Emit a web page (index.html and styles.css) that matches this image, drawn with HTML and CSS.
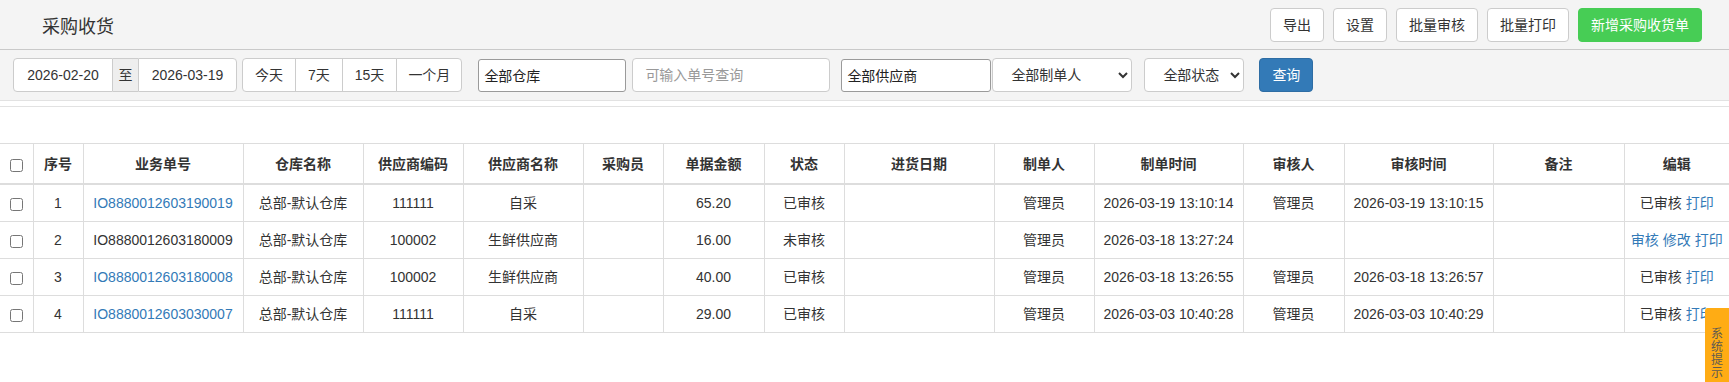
FILE: index.html
```html
<!DOCTYPE html>
<html>
<head>
    <meta charset="utf-8">
    <title>采购收货</title>
    <link rel="stylesheet" href="styles.css">
</head>
<body>
    <div class="page-header">
        <h1 class="page-title">采购收货</h1>
        <div class="header-actions">
            <button class="btn">导出</button>
            <button class="btn">设置</button>
            <button class="btn">批量审核</button>
            <button class="btn">批量打印</button>
            <button class="btn btn-green">新增采购收货单</button>
        </div>
    </div>

    <div class="toolbar">
        <div class="date-range">
            <input type="text" class="date-input" value="2026-02-20" readonly>
            <span class="date-sep">至</span>
            <input type="text" class="date-input" value="2026-03-19" readonly>
        </div>
        <div class="quick-days">
            <button class="btn">今天</button>
            <button class="btn">7天</button>
            <button class="btn">15天</button>
            <button class="btn">一个月</button>
        </div>
        <input type="text" class="pick-input warehouse" value="全部仓库" readonly>
        <input type="text" class="search-input" placeholder="可输入单号查询">
        <input type="text" class="pick-input supplier" value="全部供应商" readonly>
        <select class="filter-select maker"><option>全部制单人</option></select>
        <select class="filter-select status"><option>全部状态</option></select>
        <button class="btn btn-primary">查询</button>
    </div>
    <div class="divider"></div>

    <table class="list-table">
        <colgroup>
            <col style="width:33px"><col style="width:50px"><col style="width:160px"><col style="width:120px">
            <col style="width:100px"><col style="width:120px"><col style="width:80px"><col style="width:101px">
            <col style="width:80px"><col style="width:150px"><col style="width:100px"><col style="width:149px">
            <col style="width:101px"><col style="width:149px"><col style="width:131px"><col>
        </colgroup>
        <thead>
            <tr>
                <th><input type="checkbox"></th>
                <th>序号</th><th>业务单号</th><th>仓库名称</th><th>供应商编码</th><th>供应商名称</th>
                <th>采购员</th><th>单据金额</th><th>状态</th><th>进货日期</th><th>制单人</th>
                <th>制单时间</th><th>审核人</th><th>审核时间</th><th>备注</th><th>编辑</th>
            </tr>
        </thead>
        <tbody>
            <tr>
                <td><input type="checkbox"></td>
                <td>1</td><td><a href="#">IO8880012603190019</a></td><td>总部-默认仓库</td><td>111111</td><td>自采</td>
                <td></td><td>65.20</td><td>已审核</td><td></td><td>管理员</td>
                <td>2026-03-19 13:10:14</td><td>管理员</td><td>2026-03-19 13:10:15</td><td></td>
                <td>已审核 <a href="#">打印</a></td>
            </tr>
            <tr>
                <td><input type="checkbox"></td>
                <td>2</td><td>IO8880012603180009</td><td>总部-默认仓库</td><td>100002</td><td>生鲜供应商</td>
                <td></td><td>16.00</td><td>未审核</td><td></td><td>管理员</td>
                <td>2026-03-18 13:27:24</td><td></td><td></td><td></td>
                <td><a href="#">审核</a> <a href="#">修改</a> <a href="#">打印</a></td>
            </tr>
            <tr>
                <td><input type="checkbox"></td>
                <td>3</td><td><a href="#">IO8880012603180008</a></td><td>总部-默认仓库</td><td>100002</td><td>生鲜供应商</td>
                <td></td><td>40.00</td><td>已审核</td><td></td><td>管理员</td>
                <td>2026-03-18 13:26:55</td><td>管理员</td><td>2026-03-18 13:26:57</td><td></td>
                <td>已审核 <a href="#">打印</a></td>
            </tr>
            <tr>
                <td><input type="checkbox"></td>
                <td>4</td><td><a href="#">IO8880012603030007</a></td><td>总部-默认仓库</td><td>111111</td><td>自采</td>
                <td></td><td>29.00</td><td>已审核</td><td></td><td>管理员</td>
                <td>2026-03-03 10:40:28</td><td>管理员</td><td>2026-03-03 10:40:29</td><td></td>
                <td>已审核 <a href="#">打印</a></td>
            </tr>
        </tbody>
    </table>

    <div class="sys-tip">系统提示</div>
</body>
</html>
```

FILE: styles.css
```css
html, body {
    margin: 0;
    padding: 0;
    background: #fff;
    overflow: hidden;
}

body {
    position: relative;
    height: 382px;
}

body, input, button, select, table {
    font-family: "Liberation Sans", "Noto Sans CJK SC", sans-serif;
    font-size: 14px;
    color: #333;
}

/* header */
.page-header {
    height: 49px;
    display: flex;
    align-items: center;
    justify-content: space-between;
    background: #f4f4f4;
    border-bottom: 1px solid #c9c9c9;
    padding: 0 27px 0 42px;
}

.page-title {
    margin: 0;
    font-size: 18px;
    font-weight: normal;
    color: #333;
}

.header-actions {
    display: flex;
    gap: 9px;
    padding-top: 1px;
}

.btn {
    height: 34px;
    padding: 0 12px;
    border: 1px solid #ccc;
    border-radius: 4px;
    background: #fff;
    color: #333;
    line-height: 32px;
    cursor: pointer;
    white-space: nowrap;
}

.btn-green {
    background: #47cd55;
    border-color: #47cd55;
    color: #fff;
}

.btn-primary {
    width: 54px;
    background: #337ab7;
    border-color: #2e6da4;
    color: #fff;
    padding: 0;
}

/* toolbar */
.toolbar {
    display: flex;
    align-items: center;
    background: #f4f4f4;
    border-bottom: 1px solid #e2e2e2;
    padding: 8px 0 8px 13px;
}

.date-range {
    display: flex;
    margin-right: 5px;
}

.date-input {
    box-sizing: border-box;
    width: 100px;
    height: 34px;
    border: 1px solid #ccc;
    background: #fff;
    text-align: center;
    padding: 0;
    outline: none;
}

.date-range .date-input:first-child {
    border-radius: 4px 0 0 4px;
}

.date-range .date-input:last-child {
    width: 99px;
    border-radius: 0 4px 4px 0;
}

.date-sep {
    box-sizing: border-box;
    width: 25px;
    height: 34px;
    line-height: 32px;
    text-align: center;
    background: #eee;
    border-top: 1px solid #ccc;
    border-bottom: 1px solid #ccc;
}

.quick-days {
    display: flex;
    margin-right: 16px;
}

.quick-days .btn {
    border-radius: 0;
    margin-left: -1px;
}

.quick-days .btn:first-child {
    margin-left: 0;
    border-radius: 4px 0 0 4px;
}

.quick-days .btn:last-child {
    border-radius: 0 4px 4px 0;
    padding: 0 11px;
}

.pick-input {
    box-sizing: border-box;
    height: 33px;
    border: 1px solid #9a9a9a;
    border-radius: 3px;
    background: #fff;
    color: #222;
    padding: 0 5px;
    outline: none;
}

.pick-input.warehouse {
    width: 148px;
    margin-right: 6px;
}

.pick-input.supplier {
    width: 150px;
    margin-right: 1px;
}

.search-input {
    box-sizing: border-box;
    width: 198px;
    height: 34px;
    border: 1px solid #ccc;
    border-radius: 4px;
    padding: 0 12px;
    margin-right: 11px;
    outline: none;
}

.search-input::placeholder {
    color: #999;
}

.filter-select {
    box-sizing: border-box;
    height: 34px;
    border: 1px solid #ccc;
    border-radius: 4px;
    background: #fff;
    padding: 0 8px 0 14px;
    color: #333;
}

.filter-select.maker {
    width: 140px;
    margin-right: 12px;
}

.filter-select.status {
    width: 100px;
    margin-right: 15px;
    padding-left: 14px;
}

.divider {
    margin-top: 5px;
    border-top: 1px solid #e2e2e2;
    height: 36px;
}

/* list */
.list-table {
    width: 100%;
    table-layout: fixed;
    border-collapse: collapse;
    border-spacing: 0;
}

.list-table th,
.list-table td {
    border: 1px solid #ddd;
    text-align: center;
    white-space: nowrap;
    overflow: hidden;
    line-height: 20px;
    padding: 8px 0;
}

.list-table th {
    font-weight: bold;
    padding: 10px 0 9px;
    border-bottom: 2px solid #ddd;
}

.list-table tr > :first-child {
    border-left: none;
}

.list-table tr > :last-child {
    border-right: none;
}

.list-table input[type="checkbox"] {
    width: 13px;
    height: 13px;
    margin: 0;
    vertical-align: middle;
}

.list-table a {
    color: #337ab7;
    text-decoration: none;
}

/* floating tab */
.sys-tip {
    position: absolute;
    right: 0;
    top: 308px;
    z-index: 10;
    box-sizing: border-box;
    width: 24px;
    height: 74px;
    padding: 20px 6px 0;
    background: #ffac14;
    border-radius: 3px 0 0 0;
    color: #5e5a52;
    font-size: 12px;
    line-height: 13px;
    text-align: center;
    word-break: break-all;
}
```
